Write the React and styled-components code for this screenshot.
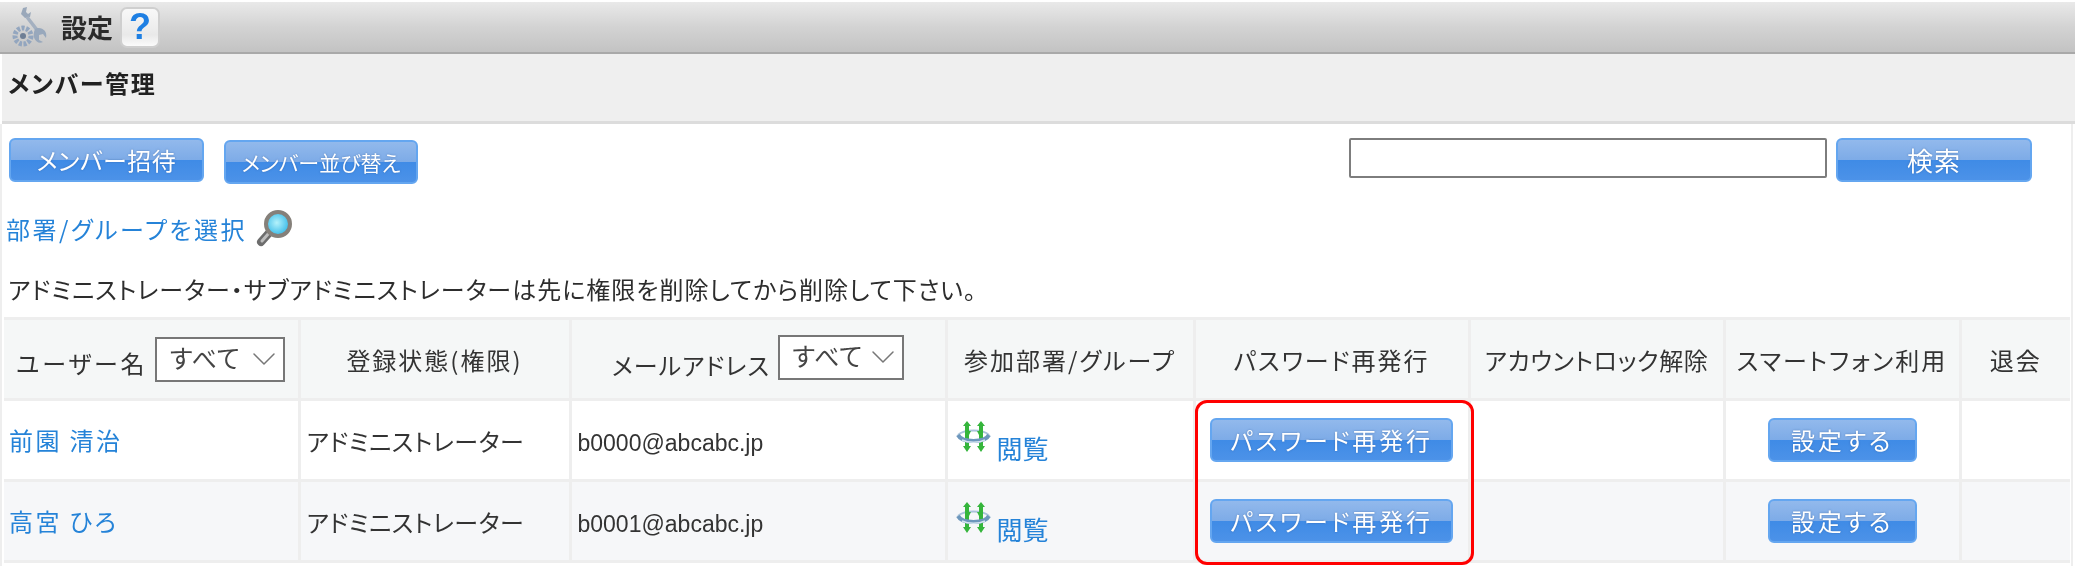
import styled, { createGlobalStyle } from "styled-components"
import { ChevronDown } from "lucide-react"

const members = [
  { id: 1, name: "前園 清治", role: "アドミニストレーター", mail: "b0000@abcabc.jp" },
  { id: 2, name: "高宮 ひろ", role: "アドミニストレーター", mail: "b0001@abcabc.jp" },
]

const GlobalStyle = createGlobalStyle`
  html, body { margin: 0; padding: 0; background: #fff; }
  body {
    font-family: "Noto Sans CJK JP", "Liberation Sans", sans-serif;
    font-feature-settings: "palt";
    color: #333;
  }
`

const Page = styled.div`
  position: relative;
  width: 2075px;
  height: 566px;
  overflow: hidden;
  box-sizing: border-box;
  padding-top: 2px;
  filter: blur(0.5px);
`

const TitleBar = styled.header`
  height: 52px;
  box-sizing: border-box;
  display: flex;
  align-items: center;
  padding-left: 10px;
  background: linear-gradient(#e9e9e9, #d3d3d3 50%, #c3c3c3);
  border-bottom: 2px solid #a9a9a9;
`

const Title = styled.h1`
  margin: 0 7px 0 13px;
  font-size: 26px;
  font-weight: 700;
  color: #2b2b2b;
  line-height: 1;
`

const HelpButton = styled.button`
  width: 40px;
  height: 41px;
  padding: 0;
  border: 2px solid #cfcfcf;
  border-radius: 7px;
  background: linear-gradient(#f8f8f8, #e9e9e9 70%, #fbfbfb);
  color: #1e7fe3;
  font: 700 36px "Liberation Sans", sans-serif;
  line-height: 36px;
`

const SectionBar = styled.div`
  height: 70px;
  box-sizing: border-box;
  margin-left: 2px;
  padding: 11px 0 0 6px;
  background: #efefef;
  border-bottom: 3px solid #dcdcdc;
  font-size: 24px;
  font-weight: 700;
  letter-spacing: 1.7px;
  line-height: 36px;
  color: #222;
`

const Content = styled.main`
  padding: 0 5px 0 4px;
  border-left: 2px solid #eee;
  margin-right: 2px;
  border-right: 2px solid #eee;
  height: 442px;
  box-sizing: border-box;
`

const Toolbar = styled.div`
  display: flex;
  align-items: flex-start;
  padding: 14px 34px 0 3px;
`

const BlueButton = styled.button`
  width: ${(p) => p.$width}px;
  height: 44px;
  margin-left: ${(p) => p.$left || 0}px;
  margin-top: ${(p) => p.$top || 0}px;
  padding: 0;
  box-sizing: border-box;
  border: 2px solid #64a6f0;
  border-radius: 6px;
  background: linear-gradient(#92b9ec, #7dabe7 50%, #3f8be6 50%, #4c92e8);
  color: #fff;
  font-family: inherit;
  font-feature-settings: "palt";
  font-size: ${(p) => p.$size || 24}px;
  letter-spacing: ${(p) => p.$spacing || 0}px;
  line-height: 36px;
  text-shadow: 0 0 2px rgba(40, 80, 140, 0.55);
`

const SearchGroup = styled.form`
  margin: 0 0 0 auto;
  display: flex;
  align-items: flex-start;
  gap: 9px;
`

const SearchInput = styled.input`
  width: 478px;
  height: 40px;
  box-sizing: border-box;
  border: 2px solid #7d7d7d;
  border-radius: 2px;
  background: #fff;
`

const PickerRow = styled.div`
  height: 40px;
  margin-top: 25px;
  display: flex;
  align-items: center;
  gap: 9px;
`

const BlueLink = styled.a`
  color: #2583d8;
  font-size: 24px;
  letter-spacing: ${(p) => p.$spacing || 0}px;
  line-height: 36px;
  text-decoration: none;
`

const Notice = styled.p`
  margin: 20px 0 0 2px;
  height: 48px;
  font-size: 24px;
  letter-spacing: 1px;
  line-height: 40px;
  color: #2d2d2d;
  white-space: nowrap;
`

const Table = styled.table`
  width: 2066px;
  margin-left: -2px;
  table-layout: fixed;
  border-collapse: collapse;
  border-top: 3px solid #eee;
  border-bottom: 3px solid #eee;
`

const Head = styled.th`
  height: 78px;
  padding: 0;
  background: #f5f7f7;
  border-right: 3px solid #eee;
  border-bottom: 3px solid #eee;
  font-size: 24px;
  font-weight: 400;
  letter-spacing: ${(p) => p.$spacing ?? 2}px;
  color: #333;
  white-space: nowrap;
  text-align: center;
  &:last-child { border-right: 0; }
`

const Row = styled.tr`
  background: ${(p) => (p.$alt ? "#f6f7f9" : "#fff")};
`

const Cell = styled.td`
  height: 78px;
  padding: 0 0 0 ${(p) => p.$pad || 0}px;
  border-right: 3px solid #eee;
  border-bottom: 3px solid #eee;
  font-size: 24px;
  letter-spacing: ${(p) => p.$spacing || 0}px;
  text-align: ${(p) => (p.$center ? "center" : "left")};
  white-space: nowrap;
  &:last-child { border-right: 0; }
`

const Mail = styled.span`
  font-family: "Liberation Sans", sans-serif;
  font-size: 23px;
  color: #333;
`

const FilterHead = styled.div`
  display: flex;
  justify-content: center;
  align-items: flex-start;
  gap: 8px;
`

const FilterLabel = styled.span`
  line-height: 36px;
  margin-top: ${(p) => p.$top}px;
  letter-spacing: ${(p) => p.$spacing}px;
`

const SelectBox = styled.div`
  position: relative;
  width: ${(p) => p.$width}px;
  height: 45px;
`

const Select = styled.select`
  width: 100%;
  height: 100%;
  box-sizing: border-box;
  appearance: none;
  border: 2px solid #777;
  border-radius: 0;
  background: #fff;
  color: #444;
  padding: 0 0 8px 11px;
  font-family: inherit;
  font-size: 25px;
`

const Chevron = styled(ChevronDown)`
  position: absolute;
  right: 1px;
  top: 2px;
  color: #777;
  pointer-events: none;
`

const ViewLink = styled.div`
  display: flex;
  align-items: flex-end;
  gap: 6px;
  svg { margin-bottom: 8px; }
`

const ViewText = styled(BlueLink)`
  font-size: 26px;
  line-height: 27px;
`

const Highlight = styled.div`
  position: absolute;
  left: 1195px;
  top: 400px;
  width: 279px;
  height: 165px;
  box-sizing: border-box;
  border: 3px solid #f00;
  border-radius: 12px;
  pointer-events: none;
`

function SettingsIcon() {
  return (
    <svg width="38" height="44" viewBox="0 0 38 44">
      <path d="M13 3 L11 9 L15 13 L20 12 L21 7 L18 9 L16 7 L17 2 Z" fill="#9aa8ba" />
      <path d="M17 12 L27 25" stroke="#a4b0c0" strokeWidth="3.5" />
      <path d="M25 24 C31 21 38 26 36 33 L33 29 L29 30 L29 35 L33 37 C27 40 21 33 25 24 Z" fill="#98a8bc" />
      <circle cx="13" cy="31" r="8" fill="none" stroke="#93a6bf" strokeWidth="5" strokeDasharray="3 1.5" />
      <circle cx="13" cy="31" r="3" fill="#6f7f95" />
    </svg>
  )
}

function SearchGlass() {
  return (
    <svg width="37" height="38" viewBox="0 0 37 38">
      <defs>
        <radialGradient id="lens" cx="0.45" cy="0.45" r="0.6">
          <stop offset="0" stopColor="#b4f2fb" />
          <stop offset="1" stopColor="#2ab4e6" />
        </radialGradient>
      </defs>
      <path d="M13 23 L5 32" stroke="#6d6d6d" strokeWidth="8" strokeLinecap="round" />
      <path d="M13 23 L6 31" stroke="#bdbdbd" strokeWidth="3" strokeLinecap="round" />
      <circle cx="22" cy="14" r="12" fill="url(#lens)" stroke="#85807a" strokeWidth="4" />
    </svg>
  )
}

function GroupIcon() {
  return (
    <svg width="35" height="33" viewBox="0 0 35 33">
      <path d="M2 15 C8 9 27 9 33 15" fill="none" stroke="#a9c3da" strokeWidth="2" />
      <path d="M11 1 L15 6 H13 V11 H15 L13 15 V26 H15 L11 32 L7 26 H9 V6 H7 Z" fill="#35b53c" />
      <path d="M25 1 L29 6 H27 V26 H29 L25 32 L21 26 H23 V15 L21 11 H23 V6 H21 Z" fill="#35b53c" />
      <path d="M2 15 C6 23 29 23 33 15" fill="none" stroke="#6d97bd" strokeWidth="4" />
      <path d="M6 20 C12 23 23 23 29 20" fill="none" stroke="#d5e4f0" strokeWidth="1.5" />
    </svg>
  )
}

function FilterSelect({ width }) {
  return (
    <SelectBox $width={width}>
      <Select defaultValue="all">
        <option value="all">すべて</option>
      </Select>
      <Chevron size={40} strokeWidth={0.9} />
    </SelectBox>
  )
}

export default function App() {
  return (
    <Page>
      <GlobalStyle />
      <TitleBar>
        <SettingsIcon />
        <Title>設定</Title>
        <HelpButton>?</HelpButton>
      </TitleBar>
      <SectionBar>メンバー管理</SectionBar>
      <Content>
        <Toolbar>
          <BlueButton $width={195} $spacing={0.5}>メンバー招待</BlueButton>
          <BlueButton $width={194} $left={20} $top={2} $size={21}>メンバー並び替え</BlueButton>
          <SearchGroup>
            <SearchInput type="text" />
            <BlueButton type="button" $width={196} $size={26} $spacing={1}>検索</BlueButton>
          </SearchGroup>
        </Toolbar>
        <PickerRow>
          <BlueLink $spacing={2.5}>部署/グループを選択</BlueLink>
          <SearchGlass />
        </PickerRow>
        <Notice>アドミニストレーター・サブアドミニストレーターは先に権限を削除してから削除して下さい。</Notice>
        <Table>
          <colgroup>
            <col style={{ width: 295 }} />
            <col style={{ width: 271 }} />
            <col style={{ width: 376 }} />
            <col style={{ width: 248 }} />
            <col style={{ width: 275 }} />
            <col style={{ width: 255 }} />
            <col style={{ width: 236 }} />
            <col style={{ width: 110 }} />
          </colgroup>
          <thead>
            <tr>
              <Head>
                <FilterHead>
                  <FilterLabel $top={8} $spacing={2.8}>ユーザー名</FilterLabel>
                  <FilterSelect width={130} />
                </FilterHead>
              </Head>
              <Head>登録状態(権限)</Head>
              <Head>
                <FilterHead>
                  <FilterLabel $top={12} $spacing={1}>メールアドレス</FilterLabel>
                  <FilterSelect width={126} />
                </FilterHead>
              </Head>
              <Head>参加部署/グループ</Head>
              <Head>パスワード再発行</Head>
              <Head $spacing={0.6}>アカウントロック解除</Head>
              <Head>スマートフォン利用</Head>
              <Head>退会</Head>
            </tr>
          </thead>
          <tbody>
            {members.map((m, i) => (
              <Row key={m.id} $alt={i % 2 === 1}>
                <Cell $pad={5}><BlueLink $spacing={2.4}>{m.name}</BlueLink></Cell>
                <Cell $pad={6} $spacing={0.5}>{m.role}</Cell>
                <Cell $pad={6}><Mail>{m.mail}</Mail></Cell>
                <Cell $pad={8}>
                  <ViewLink>
                    <GroupIcon />
                    <ViewText>閲覧</ViewText>
                  </ViewLink>
                </Cell>
                <Cell $center><BlueButton $width={243} $spacing={2.8}>パスワード再発行</BlueButton></Cell>
                <Cell />
                <Cell $center><BlueButton $width={149} $spacing={2.7}>設定する</BlueButton></Cell>
                <Cell />
              </Row>
            ))}
          </tbody>
        </Table>
      </Content>
      <Highlight />
    </Page>
  )
}
